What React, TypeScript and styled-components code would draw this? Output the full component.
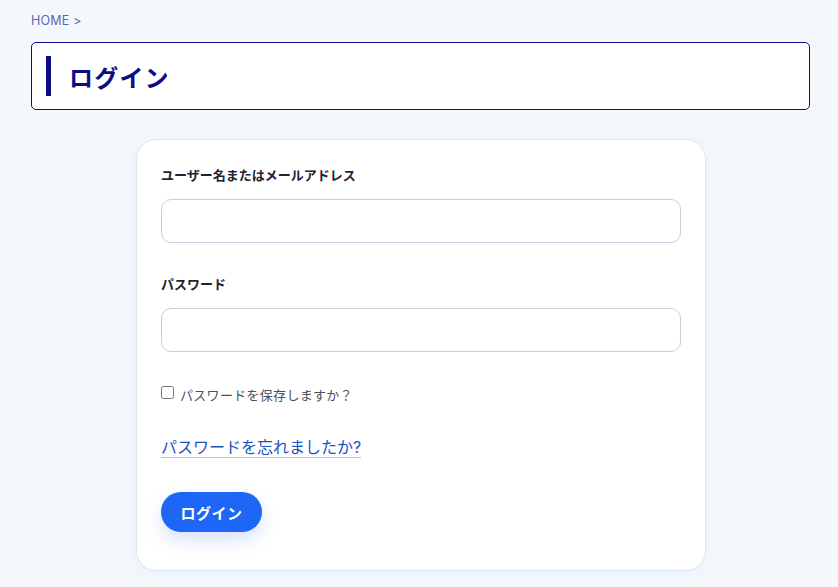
import React from 'react'
import styled, { createGlobalStyle } from 'styled-components'

const GlobalStyle = createGlobalStyle`
  html, body {
    margin: 0;
    padding: 0;
    background: #f4f8fd;
  }
  body {
    font-family: Inter, "Noto Sans CJK JP", "Noto Sans", sans-serif;
    color: #1e2233;
  }
  * {
    box-sizing: border-box;
  }
`

const Page = styled.div`
  min-height: 587px;
  padding: 13px 28px 16px 31px;
`

const Breadcrumb = styled.nav`
  font-size: 12.5px;
  line-height: 16px;
  color: #5b67ad;
  letter-spacing: 0.2px;
`

const PageTitle = styled.header`
  margin-top: 13px;
  height: 68px;
  display: flex;
  align-items: center;
  padding-left: 14px;
  background: #fff;
  border: 1px solid #0c0c86;
  border-radius: 5px;

  &::before {
    content: '';
    width: 5px;
    height: 40px;
    background: #0c0c86;
    margin-right: 18px;
  }

  h1 {
    margin: 0;
    font-size: 24px;
    font-weight: 700;
    color: #0c0c86;
    letter-spacing: 1.2px;
  }
`

const Card = styled.form`
  width: 570px;
  margin: 29px 0 0 105px;
  padding: 26px 24px 38px;
  background: #fff;
  border: 1px solid #dfe5ee;
  border-radius: 20px;
  box-shadow: 0 2px 12px rgba(180, 195, 220, 0.15);
`

const Field = styled.div`
  & + & {
    margin-top: 32px;
  }
`

const Label = styled.label`
  display: block;
  font-size: 13px;
  line-height: 18px;
  font-weight: 700;
  color: #1e2233;
`

const TextField = styled.input`
  display: block;
  margin-top: 15px;
  width: 520px;
  height: 44px;
  border: 1px solid #c3cfdd;
  border-radius: 10px;
  background: #fff;
  padding: 0 14px;
  font-size: 14px;
  outline: none;
`

const Remember = styled.label`
  margin-top: 33px;
  display: flex;
  align-items: center;
  gap: 6px;
  font-size: 13px;
  color: #4a4f5c;
  letter-spacing: 0.3px;

  input {
    margin: 0;
    width: 13px;
    height: 13px;
    position: relative;
    top: -2px;
  }
`

const ForgotLink = styled.a`
  display: inline-block;
  margin-top: 33px;
  font-size: 16px;
  line-height: 20px;
  color: #1a52c2;
  text-decoration: none;
  border-bottom: 1px solid #a9c1ec;
`

const SubmitButton = styled.button`
  display: block;
  margin-top: 34px;
  width: 101px;
  height: 40px;
  border: none;
  border-radius: 20px;
  background: #1e66f5;
  color: #fff;
  font-family: inherit;
  font-size: 15px;
  font-weight: 700;
  letter-spacing: 0.5px;
  box-shadow: 0 8px 18px rgba(30, 102, 245, 0.18);
  cursor: pointer;
`

const App: React.FC = () => (
  <Page>
    <GlobalStyle />
    <Breadcrumb>HOME &gt;</Breadcrumb>
    <PageTitle>
      <h1>ログイン</h1>
    </PageTitle>
    <Card onSubmit={(e) => e.preventDefault()}>
      <Field>
        <Label htmlFor="user">ユーザー名またはメールアドレス</Label>
        <TextField id="user" type="text" />
      </Field>
      <Field>
        <Label htmlFor="pass">パスワード</Label>
        <TextField id="pass" type="password" />
      </Field>
      <Remember>
        <input type="checkbox" />
        パスワードを保存しますか？
      </Remember>
      <ForgotLink href="#">パスワードを忘れましたか?</ForgotLink>
      <SubmitButton type="submit">ログイン</SubmitButton>
    </Card>
  </Page>
)

export default App
